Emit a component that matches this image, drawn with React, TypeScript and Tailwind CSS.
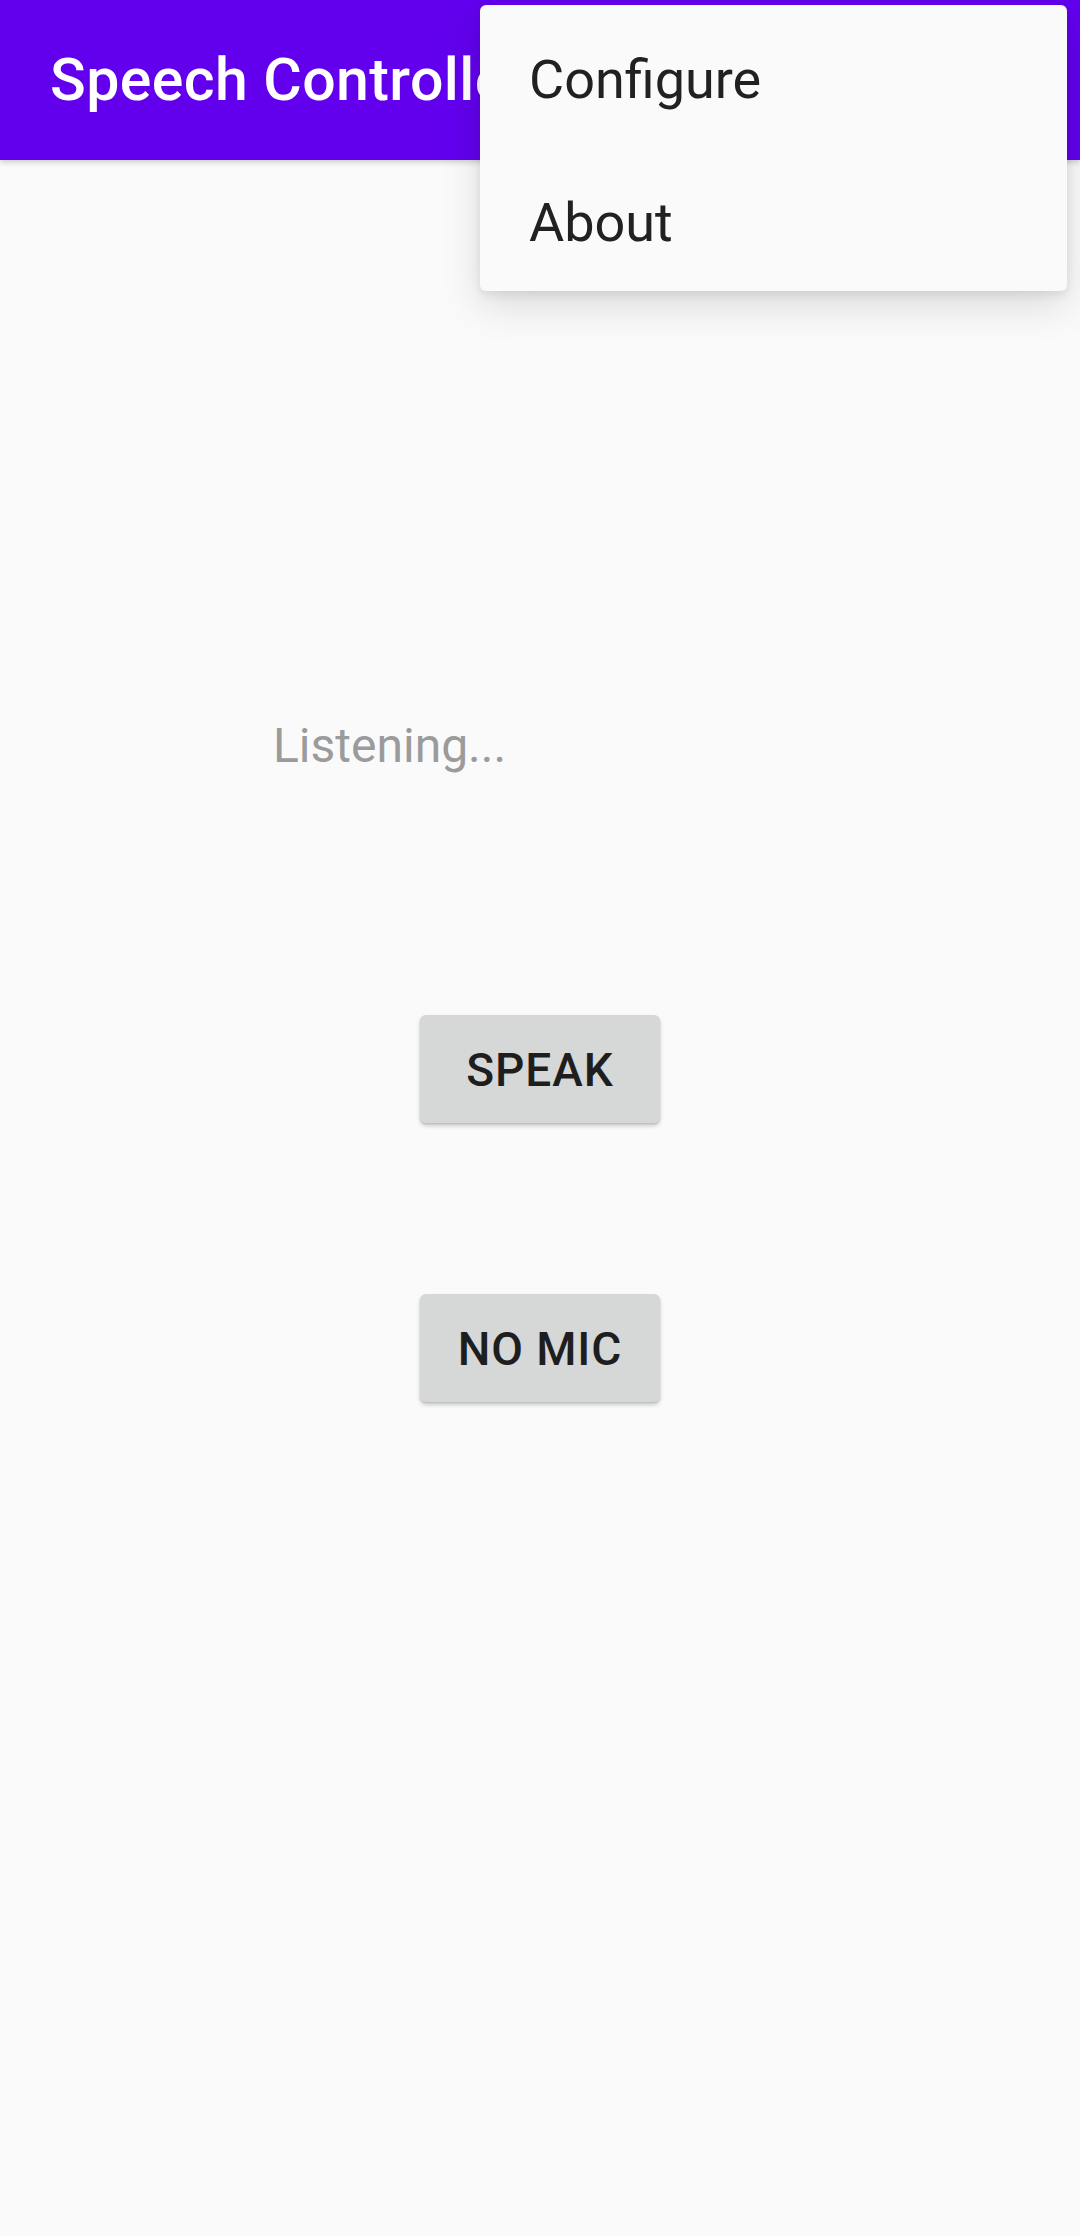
import React from 'react';

const font = { fontFamily: 'Roboto, "Noto Sans", sans-serif' };

const AppButton = ({ label }: { label: string }) => {
  return (
    <button className="w-[240px] h-[108px] rounded-[6px] bg-[#d6d7d7] text-[#1e1e1e] text-[46px] font-medium tracking-[0.02em] shadow-[0_3px_4px_rgba(0,0,0,0.18),0_1px_2px_rgba(0,0,0,0.12)] flex items-center justify-center pt-[2px]">
      {label}
    </button>
  );
};

const App = () => {
  return (
    <div className="relative w-[1080px] h-[2236px] bg-[#fafafa] overflow-hidden" style={font}>
      {/* toolbar */}
      <header className="h-[160px] bg-[#6200ee] flex items-center pl-[50px] shadow-[0_2px_6px_rgba(0,0,0,0.2)]">
        <h1 className="text-white text-[59px] font-medium tracking-[0.007em] whitespace-nowrap">Speech Controller</h1>
      </header>

      {/* content */}
      <main className="flex flex-col">
        <p className="mt-[558px] ml-[273px] text-[48px] leading-[56px] text-[#9b9b9b]">Listening...</p>
        <div className="mt-[241px] flex justify-center">
          <AppButton label="SPEAK" />
        </div>
        <div className="mt-[171px] flex justify-center">
          <AppButton label="NO MIC" />
        </div>
      </main>

      {/* overflow menu */}
      <div className="absolute top-[5px] left-[480px] w-[587px] rounded-[6px] bg-[#fafafa] shadow-[0_14px_40px_rgba(0,0,0,0.13),0_4px_10px_rgba(0,0,0,0.08)] flex flex-col">
        {['Configure', 'About'].map((item) => (
          <div key={item} className="h-[143px] flex items-center pl-[49px] pt-[6px] text-[54px] text-[#212121]">
            {item}
          </div>
        ))}
      </div>
    </div>
  );
};

export default App;
